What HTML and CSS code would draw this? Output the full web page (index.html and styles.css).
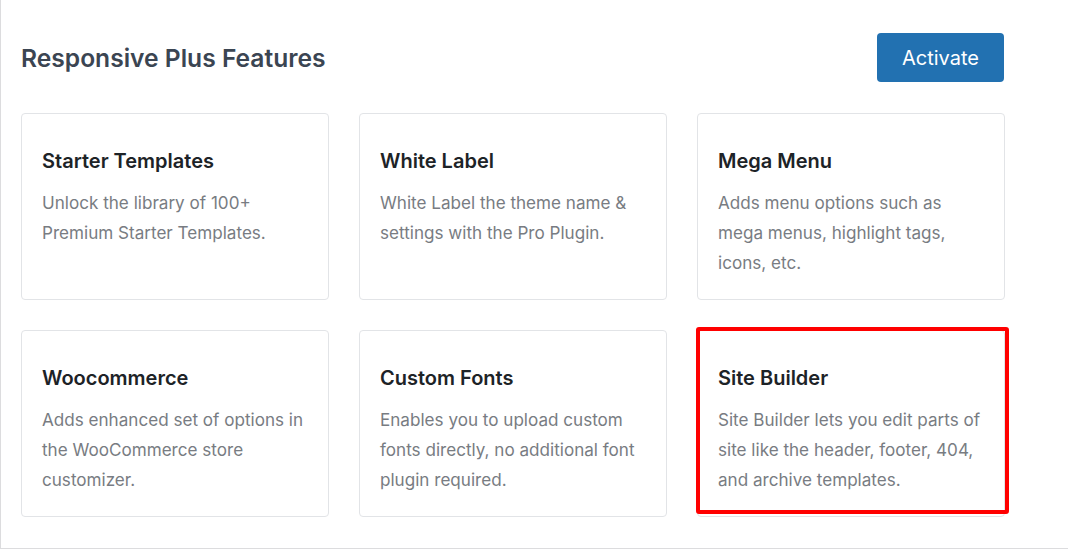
FILE: index.html
```html
<!DOCTYPE html>
<html lang="en">
<head>
<meta charset="utf-8">
<title>Responsive Plus Features</title>
<link rel="stylesheet" href="styles.css">
</head>
<body>
<div class="panel">
  <div class="inner">
    <div class="header">
      <h1 class="heading">Responsive Plus Features</h1>
      <button class="btn">Activate</button>
    </div>
    <div class="grid">
      <div class="card">
        <h2 class="card-title">Starter Templates</h2>
        <p class="card-desc">Unlock the library of 100+ Premium Starter Templates.</p>
      </div>
      <div class="card">
        <h2 class="card-title">White Label</h2>
        <p class="card-desc">White Label the theme name &amp; settings with the Pro Plugin.</p>
      </div>
      <div class="card">
        <h2 class="card-title">Mega Menu</h2>
        <p class="card-desc">Adds menu options such as mega menus, highlight tags, icons, etc.</p>
      </div>
      <div class="card">
        <h2 class="card-title">Woocommerce</h2>
        <p class="card-desc">Adds enhanced set of options in the WooCommerce store customizer.</p>
      </div>
      <div class="card">
        <h2 class="card-title">Custom Fonts</h2>
        <p class="card-desc">Enables you to upload custom fonts directly, no additional font plugin required.</p>
      </div>
      <div class="card card-marked">
        <h2 class="card-title">Site Builder</h2>
        <p class="card-desc">Site Builder lets you edit parts of site like the header, footer, 404, and archive templates.</p>
        <div class="highlight"></div>
      </div>
    </div>
  </div>
</div>
</body>
</html>
```

FILE: styles.css
```css
* { box-sizing: border-box; }
html, body { margin: 0; padding: 0; background: #fff; }
body { font-family: Inter, "Open Sans", "Liberation Sans", sans-serif; }

.panel {
  height: 549px;
  border-left: 1px solid #dcdcde;
  border-bottom: 1px solid #dcdcde;
  padding: 33px 0 0 20px;
}

.inner { width: 984px; }

.header {
  display: flex;
  align-items: center;
  justify-content: space-between;
  height: 49px;
  margin-bottom: 31px;
}

.heading {
  margin: 0;
  font-size: 24.6px;
  font-weight: 600;
  color: #3b4552;
}

.btn {
  width: 127px;
  height: 49px;
  margin-right: 1px;
  border: none;
  border-radius: 4px;
  background: #2271b1;
  color: #fff;
  font-family: inherit;
  font-size: 20px;
  font-weight: 400;
  padding: 0;
}

.grid {
  display: grid;
  grid-template-columns: repeat(3, 308px);
  grid-auto-rows: 187px;
  gap: 30px;
}

.card {
  position: relative;
  border: 1px solid #e2e4e7;
  border-radius: 4px;
  padding: 33px 14px 0 20px;
}

.card-title {
  margin: 0;
  font-size: 20px;
  line-height: 28px;
  font-weight: 600;
  color: #1d2327;
}

.card-desc {
  margin: 13px 0 0;
  font-size: 17.1px;
  line-height: 30px;
  color: #787c82;
}

.highlight {
  position: absolute;
  left: -2px;
  top: -4px;
  width: 313px;
  height: 187px;
  border: 4px solid #ff0000;
  border-radius: 3px;
  pointer-events: none;
}
```
